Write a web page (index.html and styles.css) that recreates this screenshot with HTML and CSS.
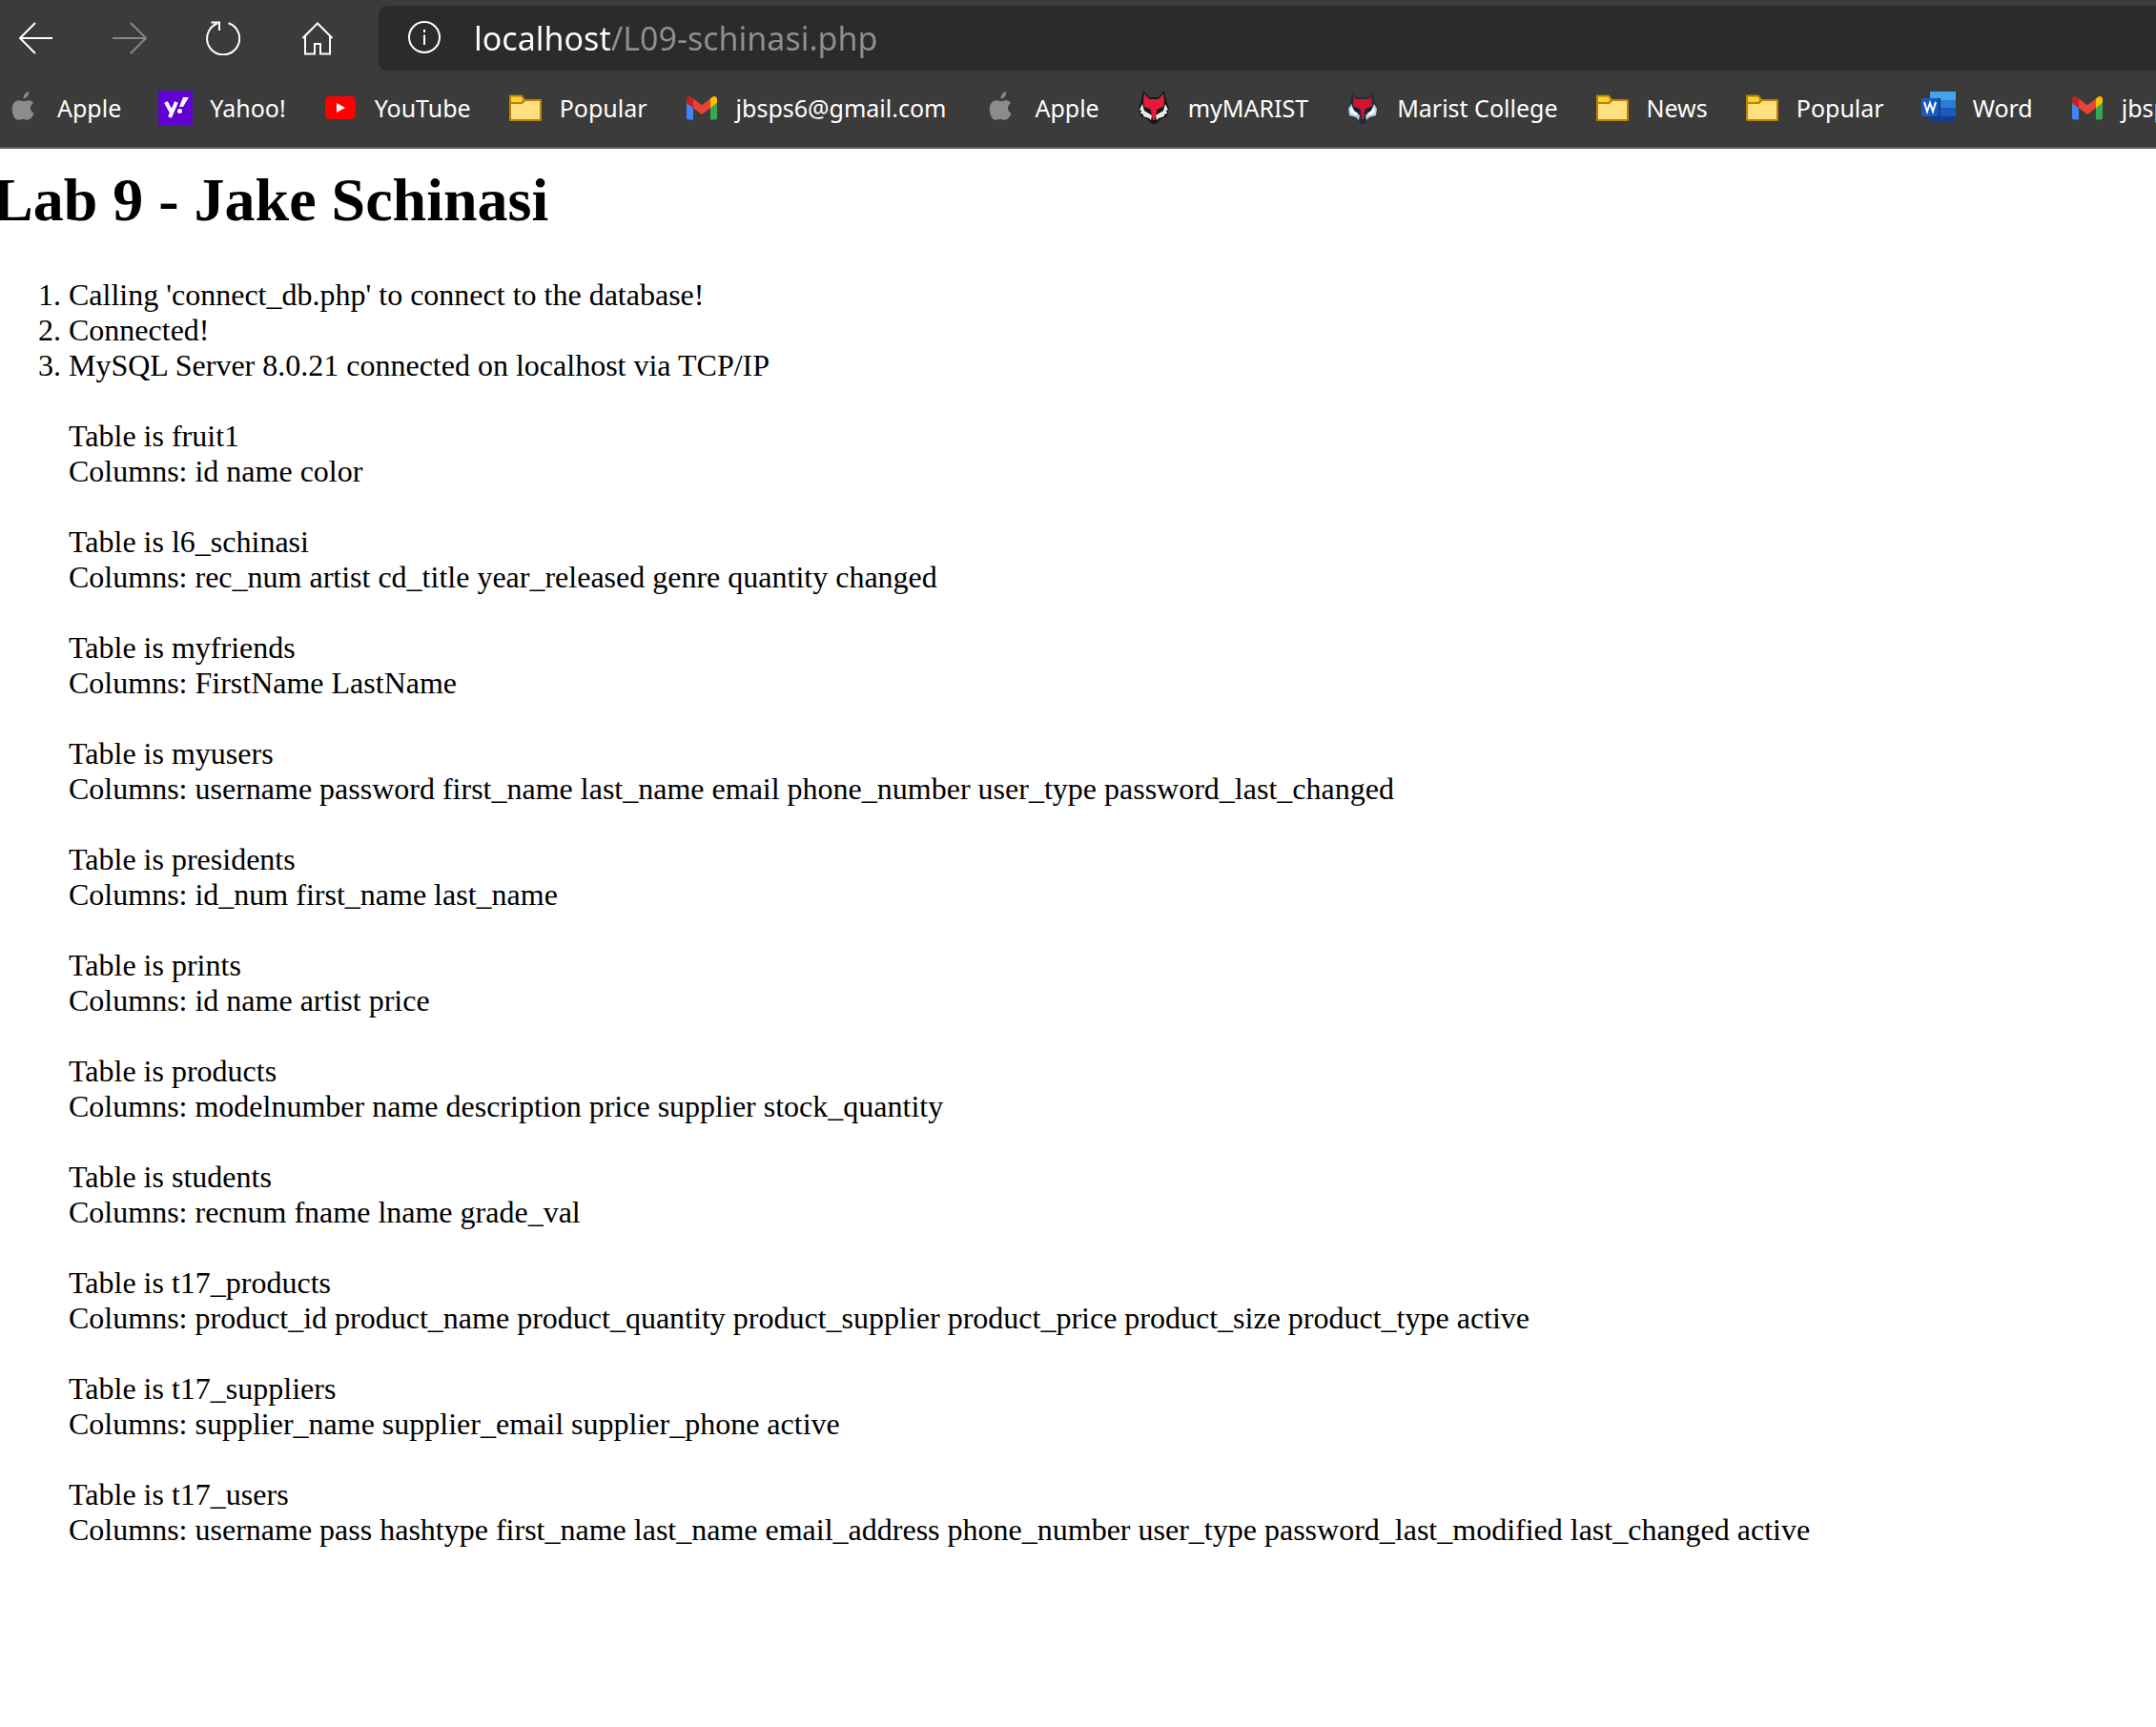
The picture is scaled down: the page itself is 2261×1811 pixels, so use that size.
FILE: index.html
```html
<!DOCTYPE html>
<html lang="en">
<head>
<meta charset="utf-8">
<title>Lab 9 - Jake Schinasi</title>
<link rel="stylesheet" href="styles.css">
</head>
<body>
<svg class="defs" aria-hidden="true">
  <symbol id="apple" viewBox="0 0 36 36">
    <path fill="#8c8c8c" d="M18.600 8.500c-.3-3.500 2.400-6.800 5.600-7.300.4 3.600-2.600 7-5.600 7.300zM29 13.200c-4.300 2.600-3.900 8.600.6 10.600-1 3-3.700 7-6.600 7-2 0-2.800-.8-5.100-.8s-3.200.8-5.100.8C9.400 30.800 6.700 24.400 6.700 19.500c0-6 3.500-9.200 7.300-9.200 2 0 3.400.9 5 .9 1.500 0 3-1 5.500-1 1.600 0 3.400 1 4.500 3z"/>
  </symbol>
  <symbol id="folder" viewBox="0 0 36 36">
    <path fill="#fdd038" stroke="#b98500" stroke-width="2" d="M2 12V5.500h12l3 4.500-3 3H2z"/>
    <path fill="#ffdf80" stroke="#b98500" stroke-width="2" stroke-linejoin="round" d="M2 31V13h12.500l3-3H34v21z"/>
  </symbol>
  <symbol id="gmail" viewBox="0 0 36 36">
    <path fill="#4285f4" d="M2 13l7 5v12.500H4a2 2 0 0 1-2-2z"/>
    <path fill="#34a853" d="M34 13l-7 5v12.500h5a2 2 0 0 0 2-2z"/>
    <path fill="#fbbc04" d="M27 8.500l2-1.700c2.100-1.600 5-.2 5 2.500V13l-7 5.300z"/>
    <path fill="#ea4335" d="M9 18.300V8.500l9 6.800 9-6.800v9.800L18 25z"/>
    <path fill="#c5221f" d="M2 9.300c0-2.700 2.900-4.100 5-2.500l2 1.700v9.800L2 13z"/>
  </symbol>
  <symbol id="fox" viewBox="0 0 36 36">
    <path fill="#161616" d="M7 0l6 7h10l6-7 2.500 12 2.500 6-1 4-1 5-7 3-5 5h-4l-5-5-7-3-1-5-1-4 2.500-6z"/>
    <path fill="#e9e9e9" d="M6 14l-3 6 2 1-1 3 3 1v2l6 2 2 2 1-5-8-5zM30 14l3 6-2 1 1 3-3 1v2l-6 2-2 2-1-5 8-5z"/>
    <path fill="#e51a38" d="M8 3l5 6h10l5-6 1 8-1 6-7 5-2 9h-2l-2-9-7-5-1-6z"/>
    <path fill="#161616" d="M9 17l6 3v3l-5-2zM27 17l-6 3v3l5-2z"/>
  </symbol>
  <symbol id="fox-blue" viewBox="0 0 36 36">
    <path fill="#1c2b40" d="M7 1l5 6h12l5-6 2 12 3 6-2 7-8 3-4 6h-4l-4-6-8-3-2-7 3-6z"/>
    <path fill="#b9d3dc" d="M6 14l-3 5 1 7 7 2 3 3 1-5-6-5zM30 14l3 5-1 7-7 2-3 3-1-5 6-5z"/>
    <path fill="#fff" d="M6 17l-1 6 6 3 2-2-4-3zM30 17l1 6-6 3-2-2 4-3z"/>
    <path fill="#7d1730" d="M8 3l4 6v6l-4-3zM28 3l-4 6v6l4-3z"/>
    <path fill="#d8102c" d="M9 9h18l1 7-8 4-1 10h-2l-1-10-8-4z"/>
    <path fill="#142338" d="M8 17l7 2v4l-5-1zM28 17l-7 2v4l5-1z"/>
  </symbol>
</svg>

<header class="browser">
  <div class="toolbar">
    <nav class="nav-buttons" aria-label="Navigation">
      <button class="icon-button" type="button" aria-label="Back">
        <svg class="icon line" viewBox="0 0 36 36"><path d="M35 18H1M17 2L1 18l16 16"/></svg>
      </button>
      <button class="icon-button" type="button" aria-label="Forward" disabled>
        <svg class="icon line" viewBox="0 0 36 36"><path d="M0 18h35M19 2l16 16-16 16"/></svg>
      </button>
      <button class="icon-button" type="button" aria-label="Refresh">
        <svg class="icon line" viewBox="0 0 36 36"><path d="M23.500 2.200A17 17 0 1 1 12 2.500M5.500 1.500H14V10"/></svg>
      </button>
      <button class="icon-button" type="button" aria-label="Home">
        <svg class="icon line" viewBox="0 0 36 36"><path d="M3.500 18L19 2.500 34.500 18M6 16v18.500h10V24h6v10.500h10V16"/></svg>
      </button>
    </nav>
    <div class="address">
      <button class="icon-button" type="button" aria-label="View site information">
        <svg class="icon line" viewBox="0 0 36 36"><circle cx="18" cy="17" r="16"/><path d="M18 14.500V25M18 9v3"/></svg>
      </button>
      <input class="url" type="text" aria-label="Address" value="localhost/L09-schinasi.php">
    </div>
  </div>
  <nav class="bookmarks" aria-label="Bookmarks">
    <a class="bookmark" href="#"><svg class="icon"><use href="#apple"/></svg>Apple</a>
    <a class="bookmark" href="#"><svg class="icon" viewBox="0 0 36 36"><path fill="#5f01d1" d="M0 0h36v36H0z"/><path fill="none" stroke="#fff" stroke-width="4" d="M8 12l6 11M19 12l-7 16"/><path fill="#fff" d="M26 7h6l-6 10h-4z"/><circle fill="#fff" cx="22.500" cy="21.500" r="2.500"/></svg>Yahoo!</a>
    <a class="bookmark" href="#"><svg class="icon" viewBox="0 0 36 36"><rect x="2" y="6" width="32" height="24" rx="5" fill="red"/><path fill="#fff" d="M14 13l9 5-9 5z"/></svg>YouTube</a>
    <a class="bookmark" href="#"><svg class="icon"><use href="#folder"/></svg>Popular</a>
    <a class="bookmark" href="#"><svg class="icon"><use href="#gmail"/></svg>jbsps6@gmail.com</a>
    <a class="bookmark" href="#"><svg class="icon"><use href="#apple"/></svg>Apple</a>
    <a class="bookmark" href="#"><svg class="icon"><use href="#fox"/></svg>myMARIST</a>
    <a class="bookmark" href="#"><svg class="icon"><use href="#fox-blue"/></svg>Marist College</a>
    <a class="bookmark" href="#"><svg class="icon"><use href="#folder"/></svg>News</a>
    <a class="bookmark" href="#"><svg class="icon"><use href="#folder"/></svg>Popular</a>
    <a class="bookmark" href="#"><svg class="icon" viewBox="0 0 36 36"><path fill="#41a5ee" d="M9 1h27v9H9z"/><path fill="#2b7cd3" d="M9 10h27v8H9z"/><path fill="#185abd" d="M9 18h27v9H9z"/><path fill="#103f91" d="M9 27h27v6H9z"/><path fill="#123d86" d="M9 8h11v21H9z"/><rect y="8" width="18" height="19" rx="1" fill="#185abd"/><path fill="none" stroke="#fff" stroke-width="2" d="M3 12l3 10 3-9 3 9 3-10"/></svg>Word</a>
    <a class="bookmark" href="#"><svg class="icon"><use href="#gmail"/></svg>jbsps6@gmail.com</a>
  </nav>
</header>

<main class="page">
  <h1 class="title">Lab 9 - Jake Schinasi</h1>
  <ol class="log">
    <li>Calling 'connect_db.php' to connect to the database!</li>
    <li>Connected!</li>
    <li>MySQL Server 8.0.21 connected on localhost via TCP/IP
      <p class="table-info">Table is fruit1<br>Columns: id name color</p>
      <p class="table-info">Table is l6_schinasi<br>Columns: rec_num artist cd_title year_released genre quantity changed</p>
      <p class="table-info">Table is myfriends<br>Columns: FirstName LastName</p>
      <p class="table-info">Table is myusers<br>Columns: username password first_name last_name email phone_number user_type password_last_changed</p>
      <p class="table-info">Table is presidents<br>Columns: id_num first_name last_name</p>
      <p class="table-info">Table is prints<br>Columns: id name artist price</p>
      <p class="table-info">Table is products<br>Columns: modelnumber name description price supplier stock_quantity</p>
      <p class="table-info">Table is students<br>Columns: recnum fname lname grade_val</p>
      <p class="table-info">Table is t17_products<br>Columns: product_id product_name product_quantity product_supplier product_price product_size product_type active</p>
      <p class="table-info">Table is t17_suppliers<br>Columns: supplier_name supplier_email supplier_phone active</p>
      <p class="table-info">Table is t17_users<br>Columns: username pass hashtype first_name last_name email_address phone_number user_type password_last_modified last_changed active</p>
    </li>
  </ol>
</main>
</body>
</html>
```

FILE: styles.css
```css
* {
  box-sizing: border-box;
}

body {
  margin: 0;
  background: #fff;
  color: #000;
  font-family: "Liberation Serif", "Times New Roman", serif;
  font-size: 32px;
  line-height: 37px;
}

.defs {
  display: none;
}

/* Browser chrome */
.browser {
  overflow: hidden;
  background: #3b3b3b;
  border-bottom: 2px solid #5f5d5f;
  color: #fff;
  font-family: "Noto Sans", "Segoe UI", sans-serif;
}

.toolbar {
  display: flex;
  align-items: center;
  gap: 47px;
  height: 80px;
  padding-left: 20px;
}

.nav-buttons {
  display: flex;
  gap: 62px;
}

.icon-button {
  display: block;
  flex: none;
  padding: 0;
  border: 0;
  background: none;
  color: #fff;
}

.icon-button:disabled {
  color: #868686;
}

.icon {
  display: block;
  flex: none;
  width: 36px;
  height: 36px;
}

.line {
  fill: none;
  stroke: currentColor;
  stroke-width: 2;
}

.address {
  display: flex;
  flex: 1;
  align-items: center;
  gap: 34px;
  height: 68px;
  padding-left: 30px;
  border-radius: 9px 0 0 9px;
  background: #2b2b2b;
}

/* Host name in white, path in grey */
.url {
  flex: 1;
  min-width: 0;
  padding: 0;
  border: 0;
  outline: 0;
  background: linear-gradient(to right, #fff 143px, #8f8f8f 143px);
  background-clip: text;
  -webkit-text-fill-color: transparent;
  font-family: inherit;
  font-size: 34px;
  line-height: 48px;
}

.bookmarks {
  display: flex;
  gap: 39px;
  height: 74px;
  padding: 15px 0 0 6px;
}

.bookmark {
  display: flex;
  flex: none;
  align-items: center;
  gap: 18px;
  height: 36px;
  color: #fff;
  font-size: 25px;
  text-decoration: none;
}

/* Document */
.page {
  margin-left: -8px;
  padding: 16px 0 40px;
}

.title {
  margin: 0 0 43px;
  font-size: 64px;
  line-height: 76px;
}

.log {
  margin: 0;
  padding-left: 80px;
}

.table-info {
  margin: 37px 0;
}
```
